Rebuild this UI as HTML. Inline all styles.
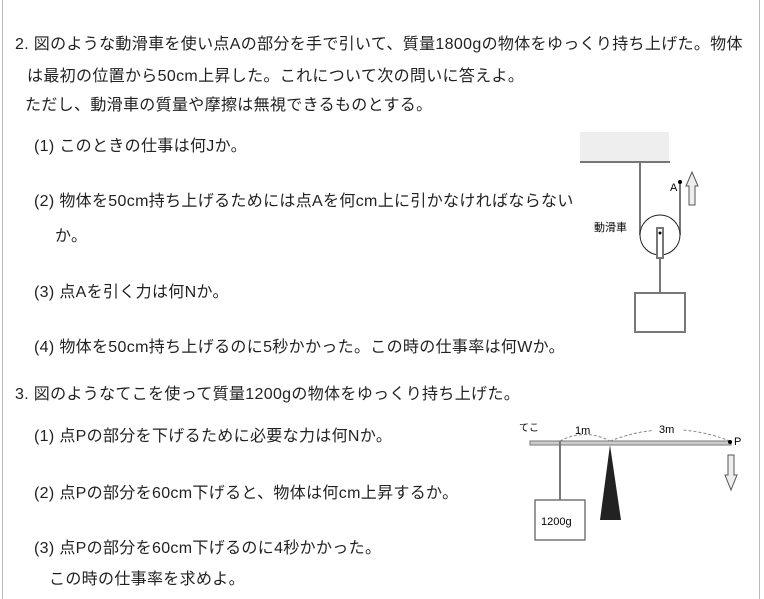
<!DOCTYPE html>
<html><head><meta charset="utf-8"><style>
body{margin:0;width:764px;height:599px;background:#fff;position:relative;overflow:hidden;font-family:"Liberation Sans","Noto Sans CJK JP",sans-serif;color:#222}
.l{position:absolute;font-size:16px;line-height:20px;white-space:nowrap;letter-spacing:0.33px}
.bl{position:absolute;left:2px;top:0;width:1px;height:599px;background:#bbb}
.br{position:absolute;left:759px;top:0;width:1px;height:599px;background:#bbb}
svg{position:absolute;left:0;top:0}
</style></head><body>
<div class="bl"></div><div class="br"></div>
<div class="l" style="left:15px;top:35px">2. 図のような動滑車を使い点Aの部分を手で引いて、質量1800gの物体をゆっくり持ち上げた。物体</div>
<div class="l" style="left:27px;top:67px">は最初の位置から50cm上昇した。これについて次の問いに答えよ。</div>
<div class="l" style="left:25px;top:96px">ただし、動滑車の質量や摩擦は無視できるものとする。</div>
<div class="l" style="left:34px;top:137px">(1) このときの仕事は何Jか。</div>
<div class="l" style="left:34px;top:192px">(2) 物体を50cm持ち上げるためには点Aを何cm上に引かなければならない</div>
<div class="l" style="left:55px;top:227px">か。</div>
<div class="l" style="left:34px;top:283px">(3) 点Aを引く力は何Nか。</div>
<div class="l" style="left:34px;top:338px">(4) 物体を50cm持ち上げるのに5秒かかった。この時の仕事率は何Wか。</div>
<div class="l" style="left:15px;top:385px">3. 図のようなてこを使って質量1200gの物体をゆっくり持ち上げた。</div>
<div class="l" style="left:34px;top:427px">(1) 点Pの部分を下げるために必要な力は何Nか。</div>
<div class="l" style="left:34px;top:484px">(2) 点Pの部分を60cm下げると、物体は何cm上昇するか。</div>
<div class="l" style="left:34px;top:539px">(3) 点Pの部分を60cm下げるのに4秒かかった。</div>
<div class="l" style="left:49px;top:570px">この時の仕事率を求めよ。</div>
<svg width="764" height="599" font-family="Liberation Sans, Noto Sans CJK JP, sans-serif">
<rect x="580" y="132" width="89" height="29" fill="#eee"/>
<line x1="580" y1="162" x2="670" y2="162" stroke="#777" stroke-width="2"/>
<line x1="640" y1="162" x2="640" y2="235" stroke="#777" stroke-width="2"/>
<line x1="680" y1="182" x2="680" y2="235" stroke="#777" stroke-width="2"/>
<circle cx="660" cy="235" r="20" fill="#fff" stroke="#222" stroke-width="1"/>
<rect x="657" y="228" width="6" height="30" fill="#fff" stroke="#777" stroke-width="2"/>
<circle cx="660" cy="233" r="1.5" fill="#000"/>
<line x1="660" y1="258" x2="660" y2="293" stroke="#777" stroke-width="2"/>
<rect x="635" y="293" width="50" height="39" fill="#fff" stroke="#777" stroke-width="2"/>
<circle cx="680" cy="182" r="2" fill="#000"/>
<text x="670" y="191" font-size="11">A</text>
<path d="M689 205V186H686L692 172L698 186H695V205Z" fill="#eee" stroke="#555"/>
<text x="594" y="231" font-size="11">動滑車</text>
<rect x="530" y="441" width="201" height="4" fill="#ccc" stroke="#777" stroke-width="1"/>
<line x1="560" y1="441" x2="560" y2="500" stroke="#777" stroke-width="2"/>
<rect x="535" y="500" width="50" height="40" fill="#fff" stroke="#777" stroke-width="1.5"/>
<text x="541" y="525" font-size="11">1200g</text>
<path d="M610 445L600 520H621Z" fill="#222"/>
<path d="M560 441Q585 428 610 441" fill="none" stroke="#888" stroke-dasharray="3,2"/>
<path d="M610 441Q670 418 730 441" fill="none" stroke="#888" stroke-dasharray="3,2"/>
<rect x="570" y="424" width="25" height="10" fill="#fff"/>
<rect x="652" y="422" width="30" height="12" fill="#fff"/>
<text x="575" y="434" font-size="11">1m</text>
<text x="659" y="433" font-size="11">3m</text>
<text x="519" y="431" font-size="10">てこ</text>
<circle cx="730" cy="442" r="2" fill="#000"/>
<text x="734" y="445" font-size="11">P</text>
<path d="M728 455V475H725L731 490L737 475H734V455Z" fill="#eee" stroke="#555"/>
</svg>
</body></html>
